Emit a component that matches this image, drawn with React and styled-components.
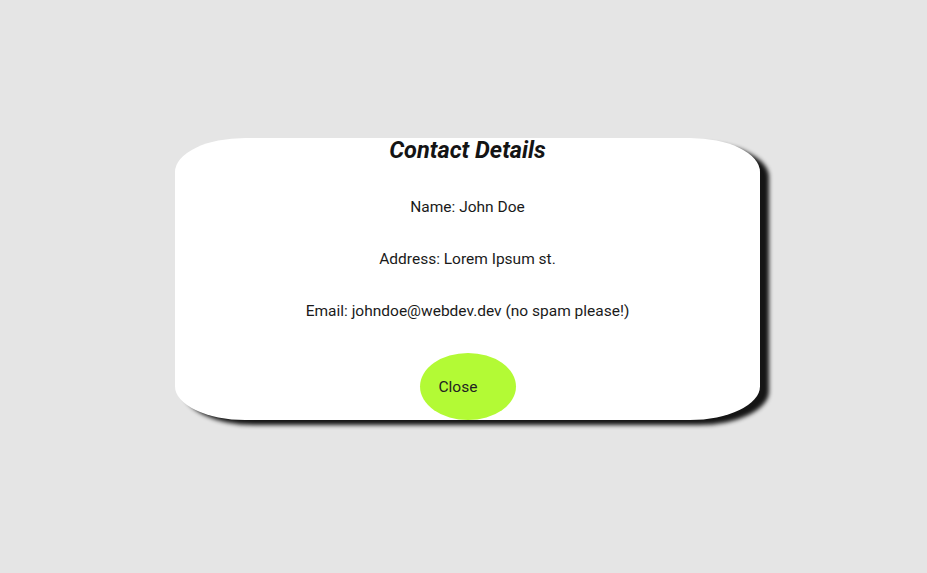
import styled, { createGlobalStyle } from "styled-components";

const GlobalStyle = createGlobalStyle`
    html, body {
        margin: 0;
        padding: 0;
        background: #e5e5e5;
        font-family: Roboto, "Liberation Sans", sans-serif;
    }
`;

const Page = styled.div`
    width: 927px;
    height: 573px;
    box-sizing: border-box;
    padding: 138px 0 0 8px;
    display: flex;
    justify-content: center;
    align-items: flex-start;
`;

const Card = styled.div`
    width: 585px;
    height: 282px;
    box-sizing: border-box;
    background: #ffffff;
    border-radius: 12%;
    box-shadow: 9px 5px 4px #151515;
    display: flex;
    flex-direction: column;
    align-items: center;
    gap: 33px;
`;

const Title = styled.h2`
    margin: 0 0 3px;
    font-size: 23.5px;
    line-height: 24px;
    font-weight: 700;
    font-style: italic;
    color: #141414;
`;

const Line = styled.p`
    margin: 0;
    font-size: 15.5px;
    line-height: 19px;
    color: #1a1a1a;
`;

const CloseButton = styled.button`
    all: unset;
    width: 96px;
    height: 67px;
    margin-top: -1px;
    box-sizing: border-box;
    padding-left: 19px;
    display: flex;
    align-items: center;
    border-radius: 50%;
    background: #b3fa35;
    font-family: Roboto, "Liberation Sans", sans-serif;
    font-size: 15.5px;
    color: #222;
    cursor: pointer;
`;

const details = [
    "Name: John Doe",
    "Address: Lorem Ipsum st.",
    "Email: johndoe@webdev.dev (no spam please!)",
];

export default function App() {
    return (
        <>
            <GlobalStyle />
            <Page>
                <Card>
                    <Title>Contact Details</Title>
                    {details.map((d) => (
                        <Line key={d}>{d}</Line>
                    ))}
                    <CloseButton>Close</CloseButton>
                </Card>
            </Page>
        </>
    );
}
